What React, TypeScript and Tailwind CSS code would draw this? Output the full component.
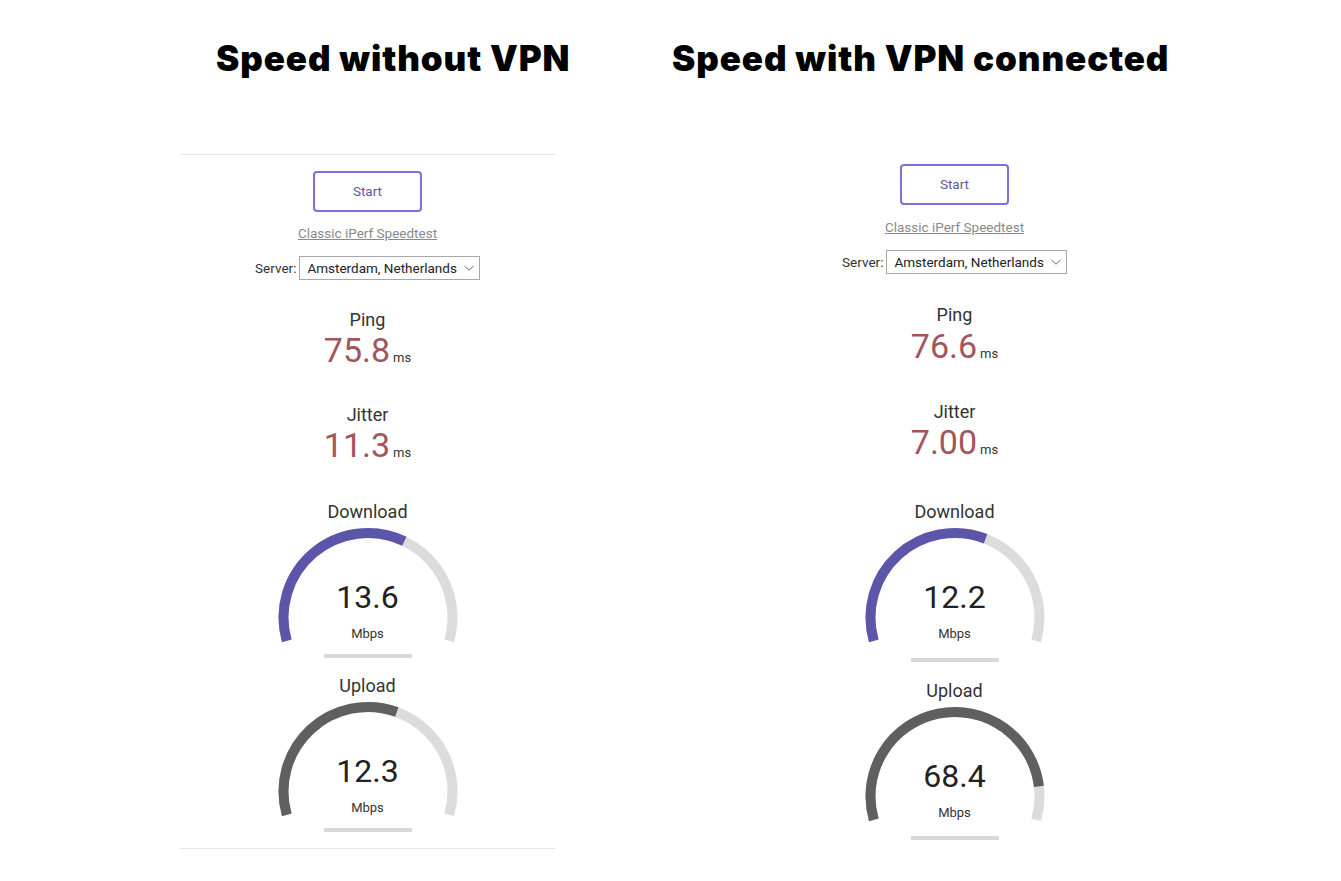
import React from 'react';

type Spacing = {
  panel: string;
  link: string;
  select: string;
  ping: string;
  pingValue: string;
  jitter: string;
  jitterValue: string;
  download: string;
  downloadBar: string;
  upload: string;
  uploadBar: string;
};

interface PanelData {
  ping: string;
  jitter: string;
  download: string;
  downloadFill: number;
  upload: string;
  uploadFill: number;
  bordered: boolean;
  spacing: Spacing;
}

const START = -106;
const END = 106;

// point on the gauge circle, angle measured clockwise from the top
function polar(cx: number, cy: number, r: number, deg: number) {
  const rad = (deg * Math.PI) / 180;
  return { x: cx + r * Math.sin(rad), y: cy - r * Math.cos(rad) };
}

function arcPath(cx: number, cy: number, r: number, from: number, to: number) {
  const a = polar(cx, cy, r, from);
  const b = polar(cx, cy, r, to);
  const large = to - from > 180 ? 1 : 0;
  return `M ${a.x} ${a.y} A ${r} ${r} 0 ${large} 1 ${b.x} ${b.y}`;
}

function Gauge({ value, fill, color }: { value: string; fill: number; color: string }) {
  const cx = 95;
  const cy = 92.5;
  const r = 84.5;
  const mid = START + (END - START) * fill;
  return (
    <div className="relative w-[190px] h-[120px]">
      <svg width="190" height="120" viewBox="0 0 190 120" className="absolute inset-0">
        <path d={arcPath(cx, cy, r, START, END)} fill="none" stroke="#dcdcdc" strokeWidth="10" />
        <path d={arcPath(cx, cy, r, START, mid)} fill="none" stroke={color} strokeWidth="10" />
      </svg>
      <div className="absolute left-0 right-0 top-[54px] text-center text-[32px] leading-[36px] text-[#222]">
        {value}
      </div>
      <div className="absolute left-0 right-0 top-[101px] text-center text-[13px] leading-[16px] text-[#333]">
        Mbps
      </div>
    </div>
  );
}

function Metric({ label, value, labelClass, valueClass }: { label: string; value: string; labelClass: string; valueClass: string }) {
  return (
    <>
      <div className={`text-[18px] leading-[22px] text-[#333] ${labelClass}`}>{label}</div>
      <div className={`flex h-[40px] items-baseline justify-center leading-[40px] ${valueClass}`}>
        <span className="text-[34px] text-[#a2565b]">{value}</span>
        <span className="ml-[3px] text-[13px] leading-none text-[#333]">ms</span>
      </div>
    </>
  );
}

function Panel({ data }: { data: PanelData }) {
  const s = data.spacing;
  return (
    <div
      className={`w-[375px] flex flex-col items-center border-t border-b ${
        data.bordered ? 'border-[#e6e6e6]' : 'border-transparent'
      } ${s.panel}`}
    >
      <button className="w-[109px] h-[41px] rounded-[4px] border-2 border-[#7b70dc] text-[13.5px] text-[#5f5a9f] bg-white">
        Start
      </button>
      <a className={`text-[13.5px] leading-[16px] text-[#8a8a8a] underline ${s.link}`}>Classic iPerf Speedtest</a>
      <div className={`flex items-center gap-[3px] text-[13.5px] text-[#333] ${s.select}`}>
        <span>Server:</span>
        <div className="h-[24px] flex items-center border border-[#a8a8a8] pl-[7px] pr-[4px] bg-white text-[#222]">
          <span>Amsterdam, Netherlands</span>
          <svg width="12" height="8" viewBox="0 0 12 8" className="ml-[6px]">
            <path d="M1.5 2 L6 6.2 L10.5 2" fill="none" stroke="#666" strokeWidth="1" />
          </svg>
        </div>
      </div>
      <Metric label="Ping" value={data.ping} labelClass={s.ping} valueClass={s.pingValue} />
      <Metric label="Jitter" value={data.jitter} labelClass={s.jitter} valueClass={s.jitterValue} />
      <div className={`text-[18px] leading-[22px] text-[#333] ${s.download}`}>Download</div>
      <div className="mt-[2px]">
        <Gauge value={data.download} fill={data.downloadFill} color="#5b56aa" />
      </div>
      <div className={`w-[88px] h-[4px] bg-[#d9d9d9] ${s.downloadBar}`} />
      <div className={`text-[18px] leading-[22px] text-[#333] ${s.upload}`}>Upload</div>
      <div className="mt-[2px]">
        <Gauge value={data.upload} fill={data.uploadFill} color="#5f5f5f" />
      </div>
      <div className={`w-[88px] h-[4px] bg-[#d9d9d9] ${s.uploadBar}`} />
    </div>
  );
}

const withoutVpn: PanelData = {
  ping: '75.8',
  jitter: '11.3',
  download: '13.6',
  downloadFill: 0.62,
  upload: '12.3',
  uploadFill: 0.594,
  bordered: true,
  spacing: {
    panel: 'pt-[16px] pb-[16px]',
    link: 'mt-[13px]',
    select: 'mt-[15px]',
    ping: 'mt-[29px]',
    pingValue: 'mt-[-1px]',
    jitter: 'mt-[34px]',
    jitterValue: 'mt-[-1px]',
    download: 'mt-[36px]',
    downloadBar: 'mt-[9px]',
    upload: 'mt-[17px]',
    uploadBar: 'mt-[9px]',
  },
};

const withVpn: PanelData = {
  ping: '76.6',
  jitter: '7.00',
  download: '12.2',
  downloadFill: 0.6,
  upload: '68.4',
  uploadFill: 0.892,
  bordered: false,
  spacing: {
    panel: 'pt-[9px] pb-[12px]',
    link: 'mt-[14px]',
    select: 'mt-[15px]',
    ping: 'mt-[30px]',
    pingValue: 'mt-0',
    jitter: 'mt-[35px]',
    jitterValue: 'mt-[-1px]',
    download: 'mt-[39px]',
    downloadBar: 'mt-[13px]',
    upload: 'mt-[18px]',
    uploadBar: 'mt-[12px]',
  },
};

export default function App() {
  return (
    <div className="w-[1341px] h-[881px] bg-white overflow-hidden font-['Roboto',sans-serif]">
      <div className="flex pt-[36px] font-['Inter',sans-serif] font-black text-[35px] leading-[44px] text-black tracking-[0.9px]">
        <h1 className="ml-[216px] w-[353px] whitespace-nowrap">Speed without VPN</h1>
        <h1 className="ml-[103px] whitespace-nowrap">Speed with VPN connected</h1>
      </div>
      <div className="flex mt-[74px]">
        <div className="ml-[180px]">
          <Panel data={withoutVpn} />
        </div>
        <div className="ml-[212px]">
          <Panel data={withVpn} />
        </div>
      </div>
    </div>
  );
}
